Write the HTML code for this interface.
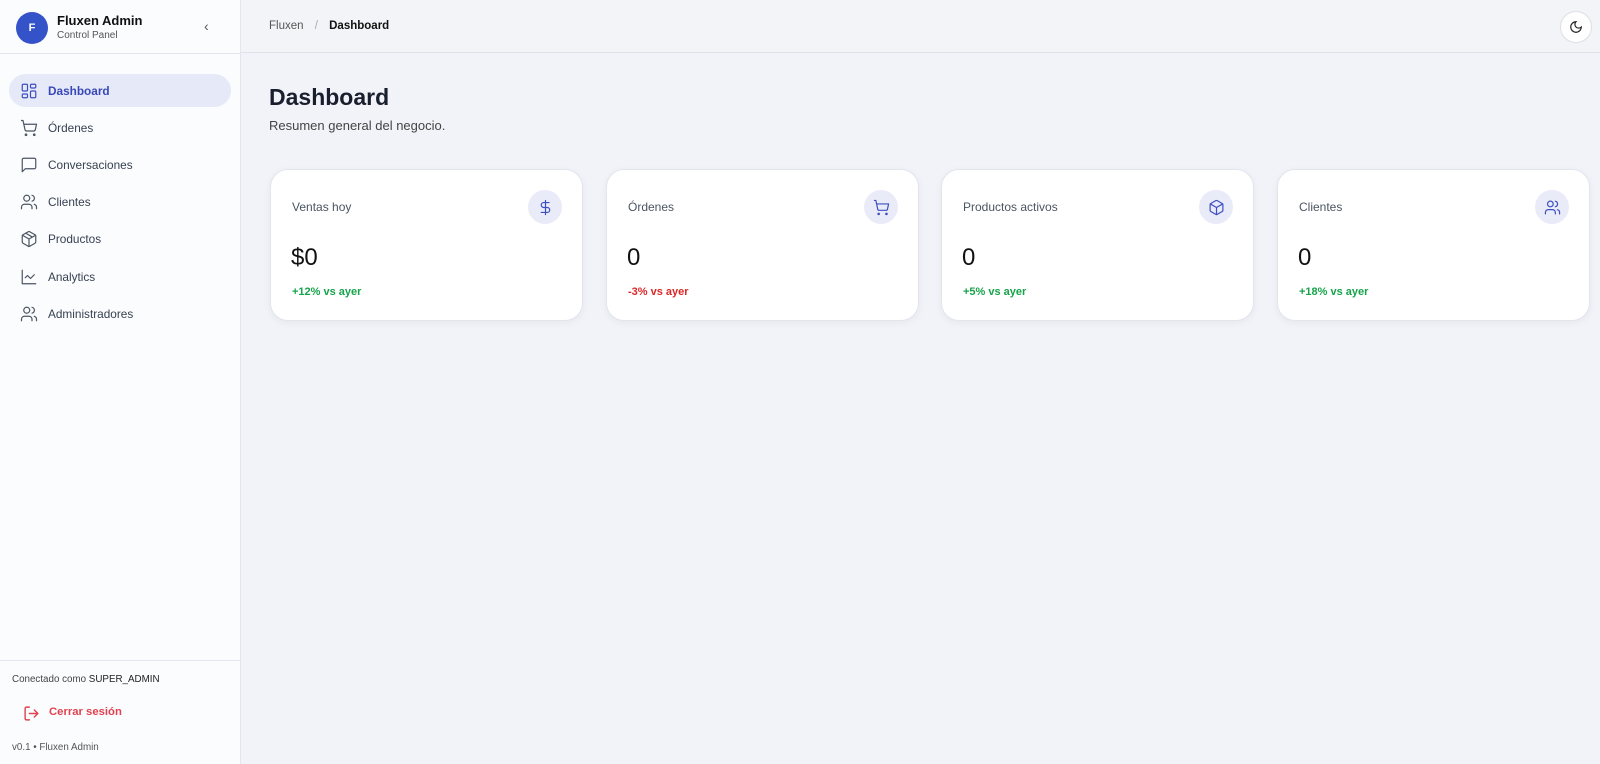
<!DOCTYPE html>
<html><head><meta charset="utf-8"><style>
*{box-sizing:border-box;margin:0;padding:0}
body{width:1600px;height:764px;font-family:"Liberation Sans",sans-serif;background:#f1f3f9;position:relative;overflow:hidden;color:#111827}
.side{position:absolute;left:0;top:0;width:241px;height:764px;background:#fbfcfe;border-right:1px solid #e3e6ee}
.abs{position:absolute}
.nav{position:absolute;left:9px;width:222px;height:33px;border-radius:17px;display:flex;align-items:center;padding-left:11px;font-size:11.8px;color:#374151}
.nav svg{width:18px;height:18px;margin-right:10px;fill:none;stroke:#4b5563;stroke-width:1.6;stroke-linecap:round;stroke-linejoin:round}
.nav.act{background:#e6e9f7;color:#3848b8;font-weight:bold}
.nav.act svg{stroke:#3d4fc0}
.card{position:absolute;top:169px;width:313px;height:152px;background:#fff;border:1px solid #e2e5ec;border-radius:18px;box-shadow:0 2px 8px rgba(0,0,0,.05)}
.card .t{position:absolute;left:21px;top:30px;font-size:12px;color:#4b5563}
.card .ic{position:absolute;right:20px;top:20px;width:34px;height:34px;border-radius:50%;background:#e9ebf8;display:flex;align-items:center;justify-content:center}
.card .ic svg{width:17px;height:17px;fill:none;stroke:#3d4fc0;stroke-width:1.7;stroke-linecap:round;stroke-linejoin:round}
.card .v{position:absolute;left:20px;top:74px;font-size:24px;color:#111}
.card .c{position:absolute;left:21px;top:116px;font-size:11px;font-weight:bold}
</style></head><body>
<div class="side">
 <div class="abs" style="left:16px;top:12px;width:32px;height:32px;border-radius:50%;background:#3553c9;color:#fff;font-size:11px;font-weight:bold;display:flex;align-items:center;justify-content:center">F</div>
 <div class="abs" style="left:57px;top:13px;font-size:13px;font-weight:bold;color:#111">Fluxen Admin</div>
 <div class="abs" style="left:57px;top:30px;font-size:10px;color:#555">Control Panel</div>
 <div class="abs" style="left:204px;top:18px;font-size:14px;color:#555">‹</div>
 <div class="abs" style="left:0;top:53px;width:241px;border-top:1px solid #e3e6ee"></div>
 <div class="nav act" style="top:74px"><svg viewBox="0 0 24 24"><rect x="3" y="3" width="7" height="9" rx="1.5"/><rect x="14" y="3" width="7" height="5" rx="1.5"/><rect x="14" y="12" width="7" height="9" rx="1.5"/><rect x="3" y="16" width="7" height="5" rx="1.5"/></svg>Dashboard</div>
 <div class="nav" style="top:111px"><svg viewBox="0 0 24 24"><circle cx="8" cy="21" r="1"/><circle cx="19" cy="21" r="1"/><path d="M2 2h2l2.7 12.4a2 2 0 0 0 2 1.6h9.7a2 2 0 0 0 2-1.6L22 7H5.1"/></svg>Órdenes</div>
 <div class="nav" style="top:148px"><svg viewBox="0 0 24 24"><path d="M21 15a2 2 0 0 1-2 2H7l-4 4V5a2 2 0 0 1 2-2h14a2 2 0 0 1 2 2z"/></svg>Conversaciones</div>
 <div class="nav" style="top:185px"><svg viewBox="0 0 24 24"><path d="M16 21v-2a4 4 0 0 0-4-4H6a4 4 0 0 0-4 4v2"/><circle cx="9" cy="7" r="4"/><path d="M22 21v-2a4 4 0 0 0-3-3.9M16 3.1a4 4 0 0 1 0 7.8"/></svg>Clientes</div>
 <div class="nav" style="top:222px"><svg viewBox="0 0 24 24"><path d="M21 8a2 2 0 0 0-1-1.7l-7-4a2 2 0 0 0-2 0l-7 4A2 2 0 0 0 3 8v8a2 2 0 0 0 1 1.7l7 4a2 2 0 0 0 2 0l7-4a2 2 0 0 0 1-1.7z"/><path d="M3.3 7 12 12l8.7-5M12 22V12M7.5 4.2l9 5.2"/></svg>Productos</div>
 <div class="nav" style="top:260px"><svg viewBox="0 0 24 24"><path d="M3 3v18h18"/><path d="m19 9-5 5-4-4-3 3"/></svg>Analytics</div>
 <div class="nav" style="top:297px"><svg viewBox="0 0 24 24"><path d="M16 21v-2a4 4 0 0 0-4-4H6a4 4 0 0 0-4 4v2"/><circle cx="9" cy="7" r="4"/><path d="M22 21v-2a4 4 0 0 0-3-3.9M16 3.1a4 4 0 0 1 0 7.8"/></svg>Administradores</div>
 <div class="abs" style="left:0;top:660px;width:241px;border-top:1px solid #e3e6ee"></div>
 <div class="abs" style="left:12px;top:674px;font-size:9.8px;color:#444">Conectado como <span style="color:#222">SUPER_ADMIN</span></div>
 <svg class="abs" style="left:23px;top:705px" width="17" height="17" viewBox="0 0 24 24" fill="none" stroke="#e0424f" stroke-width="2" stroke-linecap="round" stroke-linejoin="round"><path d="M9 21H5a2 2 0 0 1-2-2V5a2 2 0 0 1 2-2h4"/><path d="m16 17 5-5-5-5M21 12H9"/></svg>
 <div class="abs" style="left:49px;top:706px;font-size:11.3px;font-weight:bold;color:#e0424f">Cerrar sesión</div>
 <div class="abs" style="left:12px;top:742px;font-size:9.8px;color:#555">v0.1 • Fluxen Admin</div>
</div>
<div class="abs" style="left:241px;top:0;width:1359px;height:53px;border-bottom:1px solid #dfe2ea;background:#f3f4f8"></div>
<div class="abs" style="left:269px;top:20px;font-size:11.5px;color:#555">Fluxen <span style="color:#aaa;margin:0 8px">/</span> <b style="color:#111">Dashboard</b></div>
<div class="abs" style="left:1560px;top:11px;width:32px;height:32px;border-radius:50%;border:1px solid #dcdfe6;background:#fff;display:flex;align-items:center;justify-content:center"><svg width="14" height="14" viewBox="0 0 24 24" fill="none" stroke="#222" stroke-width="2"><path d="M12 3a6 6 0 0 0 9 9 9 9 0 1 1-9-9z"/></svg></div>
<div class="abs" style="left:269px;top:84px;font-size:23px;font-weight:bold;color:#1a1f2e">Dashboard</div>
<div class="abs" style="left:269px;top:118px;font-size:13px;color:#444">Resumen general del negocio.</div>

<div class="card" style="left:270px"><div class="t">Ventas hoy</div><div class="ic"><svg viewBox="0 0 24 24"><path d="M12 2v20M17 5H9.5a3.5 3.5 0 0 0 0 7h5a3.5 3.5 0 0 1 0 7H6"/></svg></div><div class="v">$0</div><div class="c" style="color:#16a34a">+12% vs ayer</div></div>
<div class="card" style="left:606px"><div class="t">Órdenes</div><div class="ic"><svg viewBox="0 0 24 24"><circle cx="8" cy="21" r="1"/><circle cx="19" cy="21" r="1"/><path d="M2 2h2l2.7 12.4a2 2 0 0 0 2 1.6h9.7a2 2 0 0 0 2-1.6L22 7H5.1"/></svg></div><div class="v">0</div><div class="c" style="color:#dc2626">-3% vs ayer</div></div>
<div class="card" style="left:941px"><div class="t">Productos activos</div><div class="ic"><svg viewBox="0 0 24 24"><path d="M21 8a2 2 0 0 0-1-1.7l-7-4a2 2 0 0 0-2 0l-7 4A2 2 0 0 0 3 8v8a2 2 0 0 0 1 1.7l7 4a2 2 0 0 0 2 0l7-4a2 2 0 0 0 1-1.7z"/><path d="M3.3 7 12 12l8.7-5M12 22V12"/></svg></div><div class="v">0</div><div class="c" style="color:#16a34a">+5% vs ayer</div></div>
<div class="card" style="left:1277px"><div class="t">Clientes</div><div class="ic"><svg viewBox="0 0 24 24"><path d="M16 21v-2a4 4 0 0 0-4-4H6a4 4 0 0 0-4 4v2"/><circle cx="9" cy="7" r="4"/><path d="M22 21v-2a4 4 0 0 0-3-3.9M16 3.1a4 4 0 0 1 0 7.8"/></svg></div><div class="v">0</div><div class="c" style="color:#16a34a">+18% vs ayer</div></div>
</body></html>
